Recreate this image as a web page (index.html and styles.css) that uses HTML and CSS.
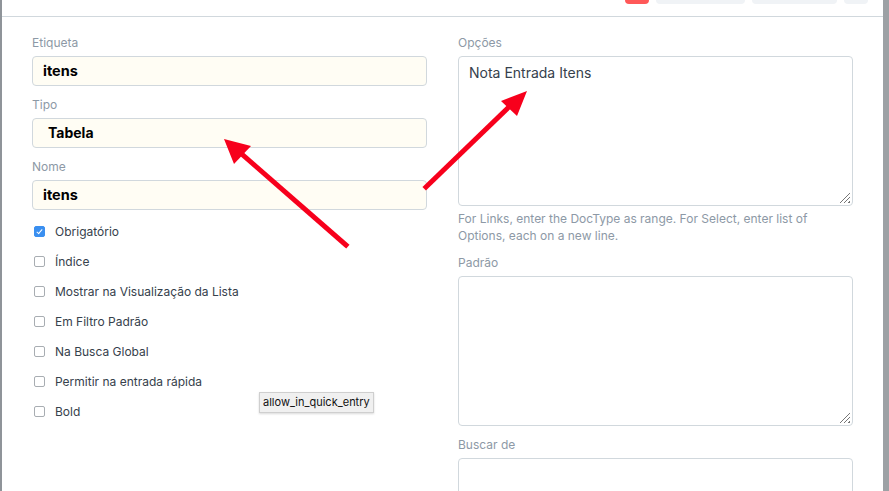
FILE: index.html
```html
<!DOCTYPE html>
<html lang="pt">
<head>
    <meta charset="UTF-8">
    <meta name="viewport" content="width=device-width, initial-scale=1.0">
    <title>Personalizar Formulário</title>
    <link rel="stylesheet" href="styles.css">
</head>
<body>
    <div class="frame">
        <div class="page">
            <div class="page-head">
                <span class="page-title">Personalizar Formulário</span>
                <div class="actions">
                    <span class="btn btn-danger"></span>
                    <span class="btn btn-default wide"></span>
                    <span class="btn btn-default mid"></span>
                    <span class="btn btn-default small"></span>
                </div>
            </div>
            <div class="form">
                <div class="col">
                    <div class="group">
                        <div class="label">Etiqueta</div>
                        <div class="input">itens</div>
                    </div>
                    <div class="group">
                        <div class="label">Tipo</div>
                        <div class="input select">Tabela</div>
                    </div>
                    <div class="group">
                        <div class="label">Nome</div>
                        <div class="input">itens</div>
                    </div>
                    <div class="checks">
                        <div class="check"><span class="box checked"></span>Obrigatório</div>
                        <div class="check"><span class="box"></span>Índice</div>
                        <div class="check"><span class="box"></span>Mostrar na Visualização da Lista</div>
                        <div class="check"><span class="box"></span>Em Filtro Padrão</div>
                        <div class="check"><span class="box"></span>Na Busca Global</div>
                        <div class="check"><span class="box"></span>Permitir na entrada rápida</div>
                        <div class="check"><span class="box"></span>Bold</div>
                    </div>
                </div>
                <div class="col">
                    <div class="group">
                        <div class="label">Opções</div>
                        <div class="textarea">Nota Entrada Itens</div>
                        <div class="help">For Links, enter the DocType as range. For Select, enter list of Options, each on a new line.</div>
                    </div>
                    <div class="group">
                        <div class="label">Padrão</div>
                        <div class="textarea"></div>
                    </div>
                    <div class="group">
                        <div class="label">Buscar de</div>
                        <div class="textarea"></div>
                    </div>
                </div>
            </div>
            <div class="tooltip">allow_in_quick_entry</div>
            <svg class="arrows" width="889" height="491" viewBox="0 0 889 491">
                <line x1="346" y1="245" x2="236" y2="149" stroke="#f7001c" stroke-width="5" stroke-linecap="square"/>
                <polygon points="224,139 251,146 234,164" fill="#f7001c"/>
                <line x1="426" y1="187" x2="512" y2="104" stroke="#f7001c" stroke-width="5" stroke-linecap="square"/>
                <polygon points="527,91 501,101 517,116" fill="#f7001c"/>
            </svg>
        </div>
    </div>
</body>
</html>
```

FILE: styles.css
```css
body {
    margin: 0;
    font-family: Inter, "Noto Sans", sans-serif;
    background-color: #fff;
    color: #36414c;
    overflow: hidden;
}
.frame {
    display: flex;
    height: 491px;
    border-left: 2px solid #8f9499;
    border-right: 6px solid #9da1a5;
}
.page {
    flex: 1;
    position: relative;
    overflow: hidden;
}
.page-head {
    display: flex;
    justify-content: space-between;
    align-items: flex-start;
    height: 16px;
    padding: 0 15px 0 28px;
    border-bottom: 1px solid #d1d8dd;
    overflow: hidden;
}
.page-title {
    margin-top: -17px;
    font-size: 16px;
    line-height: 20px;
    color: #e3e6e9;
}
.actions {
    display: flex;
    gap: 7px;
}
.btn {
    display: block;
    height: 28px;
    margin-top: -24px;
    border-radius: 4px;
}
.btn-danger {
    width: 24px;
    background-color: #ff5858;
}
.btn-default {
    background-color: #f0f3f6;
}
.wide { width: 89px; }
.mid { width: 85px; }
.small { width: 24px; }
.form {
    display: flex;
    gap: 31px;
    padding: 17px 0 0 30px;
}
.col {
    width: 395px;
}
.group {
    margin-bottom: 10px;
}
.label {
    font-size: 12px;
    line-height: 18px;
    height: 18px;
    margin-bottom: 4px;
    color: #8d99a6;
}
.input {
    height: 28px;
    line-height: 28px;
    padding: 0 10px;
    border: 1px solid #d1d8dd;
    border-radius: 4px;
    background-color: #fffdf4;
    font-size: 14.5px;
    font-weight: 700;
    color: #000;
}
.select {
    padding-left: 15px;
    font-size: 14px;
}
.textarea {
    position: relative;
    height: 136px;
    padding: 6px 10px;
    border: 1px solid #d1d8dd;
    border-radius: 4px;
    background-color: #fff;
    font-size: 14px;
    line-height: 20px;
    color: #36414c;
}
.textarea::after {
    content: "";
    position: absolute;
    right: 2px;
    bottom: 2px;
    width: 11px;
    height: 11px;
    background: repeating-linear-gradient(135deg, transparent 0 2px, #777 2px 3px);
    clip-path: polygon(100% 0, 100% 100%, 0 100%);
}
.help {
    margin-top: 4px;
    font-size: 12px;
    line-height: 17px;
    color: #8d99a6;
}
.checks {
    padding-top: 1px;
}
.check {
    display: flex;
    align-items: center;
    height: 20px;
    margin-bottom: 10px;
    font-size: 12px;
    color: #36414c;
}
.box {
    width: 9px;
    height: 9px;
    margin: 0 10px 0 2px;
    border: 1px solid #a8adb2;
    border-radius: 2px;
    background-color: #fff;
}
.checked {
    position: relative;
    border-color: #3a8ff0;
    background-color: #3a8ff0;
}
.checked::after {
    content: "";
    position: absolute;
    left: 3px;
    top: 1px;
    width: 2px;
    height: 5px;
    border: solid #fff;
    border-width: 0 1.5px 1.5px 0;
    transform: rotate(40deg);
}
.tooltip {
    position: absolute;
    left: 257px;
    top: 392px;
    padding: 1px 3px;
    font-size: 11px;
    line-height: 17px;
    color: #111;
    background-color: #f0f0f0;
    border: 1px solid #cfcfcf;
    box-shadow: 0 1px 2px rgba(0, 0, 0, 0.15);
}
.arrows {
    position: absolute;
    left: -2px;
    top: 0;
    pointer-events: none;
}
```
